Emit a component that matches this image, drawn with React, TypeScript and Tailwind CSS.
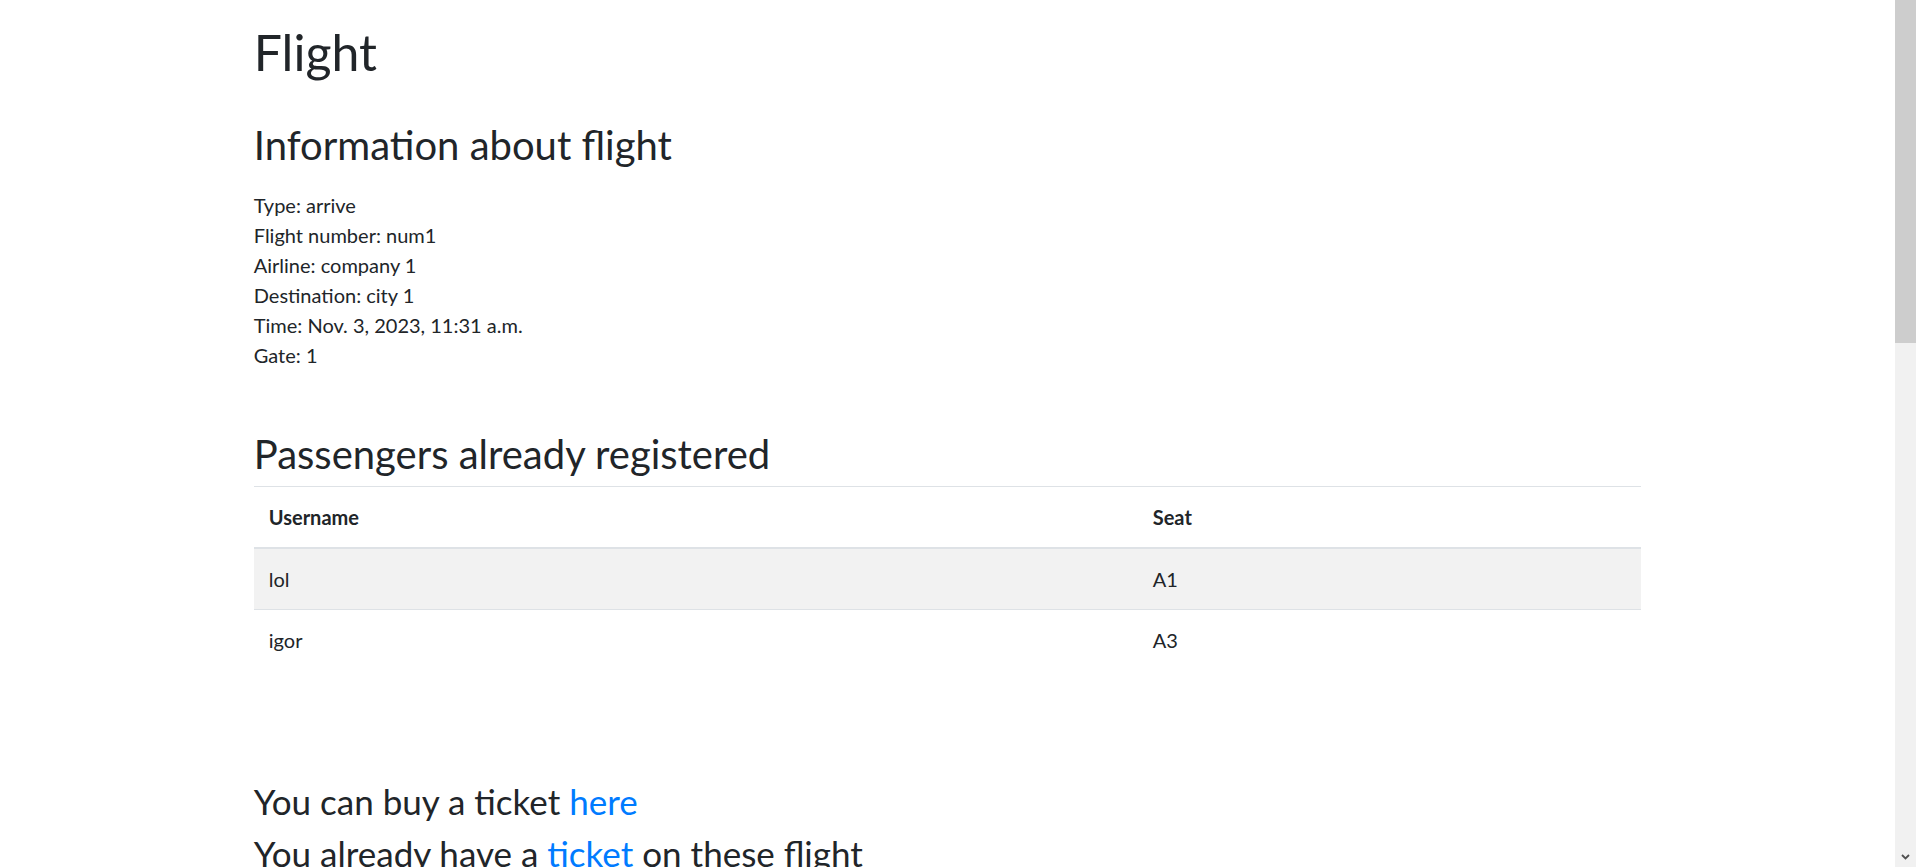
import React from 'react';

type Passenger = { username: string; seat: string };

const flightInfo = [
  'Type: arrive',
  'Flight number: num1',
  'Airline: company 1',
  'Destination: city 1',
  'Time: Nov. 3, 2023, 11:31 a.m.',
  'Gate: 1',
];

const passengers: Passenger[] = [
  { username: 'lol', seat: 'A1' },
  { username: 'igor', seat: 'A3' },
];

const Scrollbar: React.FC = () => (
  <div className="relative w-[21px] shrink-0 bg-[#f1f1f1]">
    <div className="h-[343px] w-full bg-[#cdcdcd]" />
    <svg
      className="absolute bottom-[7px] left-[6px]"
      width="9"
      height="6"
      viewBox="0 0 9 6"
      fill="none"
    >
      <path d="M1 1l3.5 3.5L8 1" stroke="#505050" strokeWidth="1.8" />
    </svg>
  </div>
);

export default function App() {
  return (
    <div className="flex h-screen overflow-hidden bg-white font-['Lato',sans-serif] text-[#212529]">
      <div className="flex-1 overflow-hidden">
        <div className="mx-auto w-[1425px] px-[18.75px] pt-[22px]">
          <h1 className="text-[50px] leading-[60px] font-normal">Flight</h1>

          {/* Flight information */}
          <h2 className="mt-[39px] text-[40px] leading-[48px] font-normal">Information about flight</h2>
          <div className="mt-[21px] text-[20px] leading-[30px]">
            {flightInfo.map((line) => (
              <div key={line}>{line}</div>
            ))}
          </div>

          {/* Passengers */}
          <h2 className="mt-[60px] text-[40px] leading-[48px] font-normal">Passengers already registered</h2>
          <table className="mt-[8px] w-full table-fixed border-collapse text-[20px] leading-[30px]">
            <thead>
              <tr>
                <th className="w-[884px] border-t border-b-2 border-[#dee2e6] px-[15px] py-[15px] text-left font-bold">
                  Username
                </th>
                <th className="border-t border-b-2 border-[#dee2e6] px-[15px] py-[15px] text-left font-bold">
                  Seat
                </th>
              </tr>
            </thead>
            <tbody>
              {passengers.map((p, i) => (
                <tr key={p.username} className={i % 2 === 0 ? 'bg-[#f2f2f2]' : ''}>
                  <td className="border-t border-[#dee2e6] px-[15px] py-[15px]">{p.username}</td>
                  <td className="border-t border-[#dee2e6] px-[15px] py-[15px]">{p.seat}</td>
                </tr>
              ))}
            </tbody>
          </table>

          {/* Ticket links */}
          <h3 className="mt-[110px] text-[35px] leading-[42px] font-normal">
            You can buy a ticket{' '}
            <a href="#" className="text-[#007bff]">
              here
            </a>
          </h3>
          <h3 className="mt-[10px] text-[35px] leading-[42px] font-normal">
            You already have a{' '}
            <a href="#" className="text-[#007bff]">
              ticket
            </a>{' '}
            on these flight
          </h3>
        </div>
      </div>
      <Scrollbar />
    </div>
  );
}
